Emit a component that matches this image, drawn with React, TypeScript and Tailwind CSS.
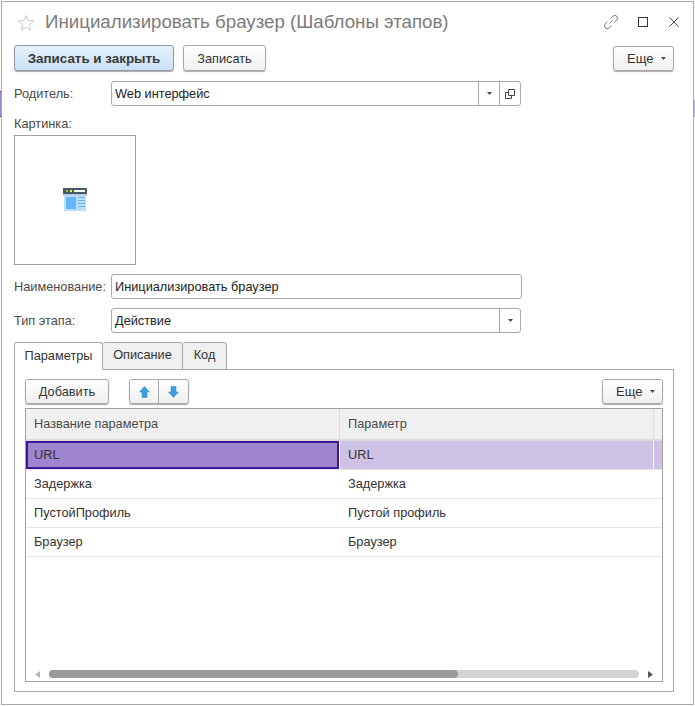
const inputCls = "flex items-center h-[25px] border border-[#a9a9a9] rounded-[3px] bg-white";
const btnCls =
  "flex items-center justify-center border border-[#a9a9a9] rounded-[3px] bg-gradient-to-b from-white to-[#f0f0f0] shadow-[0_1px_1px_#a9a9a9] text-[#333]";

function Caret() {
  return (
    <svg width="5" height="3" viewBox="0 0 5 3">
      <path d="M0 0H5L2.5 3Z" fill="#4a4a4a" />
    </svg>
  );
}

function MoreButton() {
  return (
    <button className={`${btnCls} w-[61px] h-[25px] !justify-start pl-[13px] gap-[8px]`}>
      <span className="text-[13px]">Еще</span>
      <Caret />
    </button>
  );
}

function FieldRow({
  label,
  value,
  wide,
  children,
}: {
  label: string;
  value: string;
  wide?: boolean;
  children?: React.ReactNode;
}) {
  return (
    <div className="flex items-center">
      <div className="w-[97px] shrink-0 whitespace-nowrap">{label}</div>
      <div className={`${inputCls} ${wide ? "w-[411px]" : "w-[410px]"}`}>
        <div className="flex-1 px-[3px] text-[#222] whitespace-nowrap">{value}</div>
        {children}
      </div>
    </div>
  );
}

function PageIcon() {
  return (
    <svg width="24" height="24" viewBox="0 0 24 24">
      <rect x="1" y="1" width="22" height="22" fill="#bbdefb" />
      <rect x="0" y="0" width="24" height="6" fill="#455a64" />
      <rect x="0" y="6" width="24" height="2" fill="#b7cfe2" />
      <rect x="3" y="2" width="2" height="2" fill="#8bc34a" />
      <rect x="7" y="2" width="2" height="2" fill="#ffeb3b" />
      <rect x="11" y="2" width="11" height="2" fill="#ffffff" />
      <rect x="3" y="9" width="10" height="12" fill="#64b5f6" />
      <rect x="15" y="9" width="7" height="1" fill="#64b5f6" />
      <rect x="15" y="12" width="7" height="1" fill="#64b5f6" />
      <rect x="15" y="15" width="7" height="1" fill="#64b5f6" />
      <rect x="15" y="18" width="7" height="1" fill="#64b5f6" />
    </svg>
  );
}

function Arrow({ down }: { down?: boolean }) {
  return (
    <svg width="11" height="12" viewBox="0 0 11 12" className={down ? "rotate-180" : ""}>
      <path d="M5.5 .5L10.5 6H8V11.5H3V6H.5Z" fill="#3f9fdc" stroke="#2c82bd" strokeWidth="0.5" />
    </svg>
  );
}

const rows = [
  ["Задержка", "Задержка"],
  ["ПустойПрофиль", "Пустой профиль"],
  ["Браузер", "Браузер"],
];

export default function App() {
  return (
    <div className="relative w-[695px] h-[706px] bg-white pt-px pl-px text-[12.75px] leading-[15px] text-[#4a4a4a] [font-family:'Liberation_Sans',Arial,sans-serif]">
      {/* bits of the page behind the window */}
      <div className="absolute left-0 top-[91px] w-px h-[26px] bg-[#9f84cf] border-y border-[#3a1a9a]" />
      <div className="absolute right-0 top-[100px] w-px h-[17px] bg-[#b5aed6]" />

      <div className="w-[693px] h-[704px] border border-[#a9a9a9] bg-white pl-[12px] pr-[19px]">
        {/* title bar */}
        <div className="flex items-center h-[43px] pb-[3px]">
          <svg width="18" height="17" viewBox="0 0 18 17" className="ml-[3px] shrink-0">
            <path
              d="M9 1.5L11.1 6.6L16.6 7L12.4 10.6L13.7 16L9 13.1L4.3 16L5.6 10.6L1.4 7L6.9 6.6Z"
              fill="none"
              stroke="#c4c8cc"
              strokeWidth="1"
            />
          </svg>
          <div className="ml-[10px] text-[18.7px] leading-[22px] text-[#7b7b7b] whitespace-nowrap">
            Инициализировать браузер (Шаблоны этапов)
          </div>
          <div className="ml-auto flex items-center -mr-[5px]">
            <svg width="16" height="16" viewBox="0 0 16 16" fill="none" stroke="#777" strokeWidth="1" className="mr-[19px]">
              <path d="M6.5 9.5L9.5 6.5" />
              <path d="M7.5 4.5L9.8 2.2a2.6 2.6 0 0 1 3.9 3.9L11.4 8.4" />
              <path d="M8.5 11.5L6.2 13.8a2.6 2.6 0 0 1 -3.9 -3.9L4.6 7.6" />
            </svg>
            <div className="w-[10px] h-[10px] border border-[#333] mr-[21px]" />
            <svg width="10" height="10" viewBox="0 0 10 10" stroke="#444" strokeWidth="1">
              <path d="M.5 .5L9.5 9.5M9.5 .5L.5 9.5" />
            </svg>
          </div>
        </div>

        {/* command bar */}
        <div className="flex items-center">
          <button className="w-[160px] h-[26px] flex items-center justify-center border border-[#8e9aa8] rounded-[3px] bg-gradient-to-b from-[#e6f2fc] to-[#c9e0f5] shadow-[0_1px_1px_#a9a9a9] text-[13.4px] font-bold text-[#3a3a3a]">
            Записать и закрыть
          </button>
          <button className={`${btnCls} w-[83px] h-[26px] ml-[9px]`}>Записать</button>
          <div className="ml-auto">
            <MoreButton />
          </div>
        </div>

        <div className="mt-[10px]">
          <FieldRow label="Родитель:" value="Web интерфейс">
            <div className="w-[21px] h-full border-l border-[#a9a9a9] flex items-center justify-center">
              <Caret />
            </div>
            <div className="w-[21px] h-full border-l border-[#a9a9a9] flex items-center justify-center">
              <svg width="10" height="10" viewBox="0 0 10 10" fill="none" stroke="#444">
                <path d="M3.5 .5H9.5V6.5H3.5Z" />
                <path d="M3.5 3.5H.5V9.5H6.5V6.5" />
              </svg>
            </div>
          </FieldRow>
        </div>

        <div className="mt-[10px]">Картинка:</div>
        <div className="mt-[4px] w-[122px] h-[130px] border border-[#a0a0a0] flex items-center justify-center">
          <PageIcon />
        </div>

        <div className="mt-[9px]">
          <FieldRow wide label="Наименование:" value="Инициализировать браузер" />
        </div>
        <div className="mt-[9px]">
          <FieldRow label="Тип этапа:" value="Действие">
            <div className="w-[21px] h-full border-l border-[#a9a9a9] flex items-center justify-center">
              <Caret />
            </div>
          </FieldRow>
        </div>

        {/* tabs */}
        <div className="mt-[9px] flex h-[28px] items-start text-[#333]">
          <div className="h-[28px] w-[89px] flex items-center justify-center pb-[3px] border border-b-0 border-[#a9a9a9] rounded-t-[3px] bg-white relative z-10">
            Параметры
          </div>
          <div className="h-[28px] w-[80px] flex items-center justify-center pb-[3px] border border-l-0 border-[#a9a9a9] rounded-t-[3px] bg-[#f0f0f0]">
            Описание
          </div>
          <div className="h-[28px] w-[44px] flex items-center justify-center pb-[3px] border border-l-0 border-[#a9a9a9] rounded-t-[3px] bg-[#f0f0f0]">
            Код
          </div>
        </div>
        <div className="w-[660px] h-[323px] border border-[#a9a9a9] -mt-px px-[10px] pt-[9px]">
          <div className="flex items-center">
            <button className={`${btnCls} w-[84px] h-[25px]`}>Добавить</button>
            <div className={`${btnCls} ml-[20px] w-[60px] h-[25px]`}>
              <div className="w-[29px] h-full flex items-center justify-center border-r border-[#a9a9a9]">
                <Arrow />
              </div>
              <div className="flex-1 h-full flex items-center justify-center">
                <Arrow down />
              </div>
            </div>
            <div className="ml-auto">
              <MoreButton />
            </div>
          </div>

          {/* table */}
          <div className="mt-[4px] w-[638px] h-[274px] border border-[#a0a0a0] flex flex-col">
            <div className="flex h-[32px] shrink-0 bg-[#f0f0f0] border-b-2 border-[#dcdcdc]">
              <div className="w-[314px] flex items-center pl-[8px] pb-[2px] border-r border-[#dcdcdc]">Название параметра</div>
              <div className="w-[314px] flex items-center pl-[8px] pb-[2px] border-r border-[#dcdcdc]">Параметр</div>
            </div>
            <div className="flex h-[29px] shrink-0 border-b border-[#e5e5e5] bg-[#cdc1e6] text-[#333]">
              <div className="w-[313px] flex items-center pl-[6px] pb-[1px] bg-[#9f84cf] border-2 border-[#3a1a9a]">URL</div>
              <div className="w-[315px] flex items-center pl-[8px] pb-[2px] border-l border-r border-white">URL</div>
            </div>
            {rows.map((r) => (
              <div key={r[0]} className="flex h-[29px] shrink-0 border-b border-[#e5e5e5] text-[#333]">
                <div className="w-[314px] flex items-center pl-[8px] pb-[2px]">{r[0]}</div>
                <div className="w-[314px] flex items-center pl-[8px] pb-[2px]">{r[1]}</div>
              </div>
            ))}
            <div className="mt-auto flex items-center h-[8px] mb-[3px] pl-[9px] pr-[9px]">
              <svg width="5" height="7" viewBox="0 0 5 7"><path d="M5 0V7L0 3.5Z" fill="#b5b5b5" /></svg>
              <div className="ml-[9px] w-[590px] h-[8px] rounded-[4px] bg-[#d4d4d4]">
                <div className="w-[409px] h-[8px] rounded-[4px] bg-[#9a9a9a]" />
              </div>
              <svg width="5" height="7" viewBox="0 0 5 7" className="ml-auto"><path d="M0 0V7L5 3.5Z" fill="#555" /></svg>
            </div>
          </div>
        </div>
      </div>
    </div>
  );
}
